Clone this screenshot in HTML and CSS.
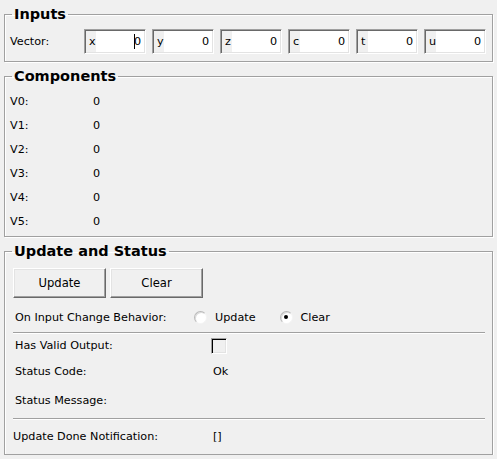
FILE: index.html
```html
<!DOCTYPE html>
<html>
<head>
<meta charset="utf-8">
<link rel="stylesheet" href="styles.css">
</head>
<body>
<fieldset class="group group-inputs">
  <legend class="group-title">Inputs</legend>
  <div class="vector-row">
    <span class="vec-label">Vector:</span>
    <div class="fields">
      <div class="field"><span class="fl">x</span><span class="fv"><span class="caret"></span>0</span></div>
      <div class="field"><span class="fl">y</span><span class="fv">0</span></div>
      <div class="field"><span class="fl">z</span><span class="fv">0</span></div>
      <div class="field"><span class="fl">c</span><span class="fv">0</span></div>
      <div class="field"><span class="fl">t</span><span class="fv">0</span></div>
      <div class="field"><span class="fl">u</span><span class="fv">0</span></div>
    </div>
  </div>
</fieldset>

<fieldset class="group group-components">
  <legend class="group-title">Components</legend>
  <div class="comp-row"><span class="comp-label">V0:</span><span>0</span></div>
  <div class="comp-row"><span class="comp-label">V1:</span><span>0</span></div>
  <div class="comp-row"><span class="comp-label">V2:</span><span>0</span></div>
  <div class="comp-row"><span class="comp-label">V3:</span><span>0</span></div>
  <div class="comp-row"><span class="comp-label">V4:</span><span>0</span></div>
  <div class="comp-row"><span class="comp-label">V5:</span><span>0</span></div>
</fieldset>

<fieldset class="group group-status">
  <legend class="group-title">Update and Status</legend>
  <div class="buttons">
    <div class="btn">Update</div>
    <div class="btn">Clear</div>
  </div>
  <div class="radio-row">
    <span class="radio-label">On Input Change Behavior:</span>
    <span class="radio-opt"><span class="radio"></span>Update</span>
    <span class="radio-opt"><span class="radio checked"></span>Clear</span>
  </div>
  <div class="sep"></div>
  <div class="st-row st-valid"><span class="st-label">Has Valid Output:</span><span class="check"></span></div>
  <div class="st-row st-code"><span class="st-label">Status Code:</span><span class="st-val">Ok</span></div>
  <div class="st-row st-msg"><span class="st-label">Status Message:</span><span class="st-val"></span></div>
  <div class="sep"></div>
  <div class="st-row st-done"><span class="st-label done-label">Update Done Notification:</span><span class="st-val">[]</span></div>
</fieldset>
</body>
</html>
```

FILE: styles.css
```css
html, body {
  margin: 0;
  background: #f0f0f0;
}
body {
  padding: 0 4px;
  font-family: "DejaVu Sans", sans-serif;
  font-size: 11.2px;
  color: #000;
}
.group {
  margin: 0;
  padding: 0 5px;
  border: 1px solid #a0a0a0;
  box-shadow: 1px 1px 0 #fff, inset 1px 1px 0 #fff;
  min-inline-size: 0;
}
.group-title {
  font-weight: bold;
  font-size: 14.5px;
  line-height: 16px;
  padding: 0 2px;
  margin-left: 2px;
}
.group-inputs {
  margin-top: 6px;
  padding-top: 7px;
  padding-bottom: 7px;
}
.vector-row {
  display: flex;
  align-items: center;
  height: 25px;
}
.vec-label {
  width: 74px;
}
.fields {
  display: flex;
  gap: 6px;
}
.field {
  box-sizing: border-box;
  width: 62px;
  height: 25px;
  display: flex;
  border: 1px solid;
  border-color: #a0a0a0 #fff #fff #a0a0a0;
  box-shadow: inset 1px 1px 0 #696969, inset -1px -1px 0 #e3e3e3;
  padding: 1px;
}
.fl {
  width: 7px;
  padding-left: 3px;
  background: #f0f0f0;
  display: flex;
  align-items: center;
}
.fv {
  flex: 1;
  background: #fff;
  text-align: right;
  padding-right: 3px;
  display: flex;
  align-items: center;
  justify-content: flex-end;
}
.caret {
  display: inline-block;
  width: 1px;
  height: 15px;
  background: #000;
  margin-right: -1px;
}
.group-components {
  margin-top: 6px;
  padding-top: 5px;
  padding-bottom: 3px;
}
.comp-row {
  display: flex;
  align-items: center;
  height: 24px;
}
.comp-label {
  width: 83px;
}
.group-status {
  margin-top: 6px;
  padding-top: 9px;
  padding-bottom: 2px;
}
.buttons {
  display: flex;
  gap: 4px;
  padding-left: 3px;
}
.btn {
  box-sizing: border-box;
  width: 93px;
  height: 30px;
  display: flex;
  align-items: center;
  justify-content: center;
  font-size: 11.6px;
  background: #f0f0f0;
  border: 1px solid;
  border-color: #fff #696969 #696969 #fff;
  box-shadow: inset -1px -1px 0 #a0a0a0, inset 1px 1px 0 #e3e3e3;
}
.radio-row {
  display: flex;
  align-items: center;
  height: 24px;
  margin-top: 7px;
  padding-left: 5px;
}
.radio-label {
  width: 179px;
}
.radio-opt {
  display: flex;
  align-items: center;
  margin-right: 24px;
}
.radio {
  box-sizing: border-box;
  width: 13px;
  height: 13px;
  border-radius: 50%;
  margin-right: 8px;
  background: #fff;
  border: 1px solid;
  border-color: #b8b8b8 #f4f4f4 #f4f4f4 #b8b8b8;
  box-shadow: inset 1px 1px 0 #dcdcdc;
  display: flex;
  align-items: center;
  justify-content: center;
}
.radio.checked::after {
  content: "";
  width: 4px;
  height: 4px;
  border-radius: 50%;
  background: #000;
}
.sep {
  margin: 3px 2px 0 3px;
  border-top: 1px solid #a0a0a0;
  border-bottom: 1px solid #fff;
}
.st-row {
  display: flex;
  align-items: center;
  padding-left: 5px;
}
.st-label {
  width: 196px;
}
.st-valid { height: 23px; }
.st-code { height: 29px; }
.st-msg { height: 29px; }
.st-done {
  height: 32px;
  padding-left: 3px;
}
.done-label {
  width: 199px;
}
.check {
  box-sizing: border-box;
  width: 16px;
  height: 16px;
  background: #f0f0f0;
  border: 1px solid;
  border-color: #a0a0a0 #fff #fff #a0a0a0;
  box-shadow: inset 1px 1px 0 #000, inset -1px -1px 0 #e3e3e3;
}
.st-code .st-val { margin-left: 2px; }
.st-done .st-val { margin-left: 1px; }
```
